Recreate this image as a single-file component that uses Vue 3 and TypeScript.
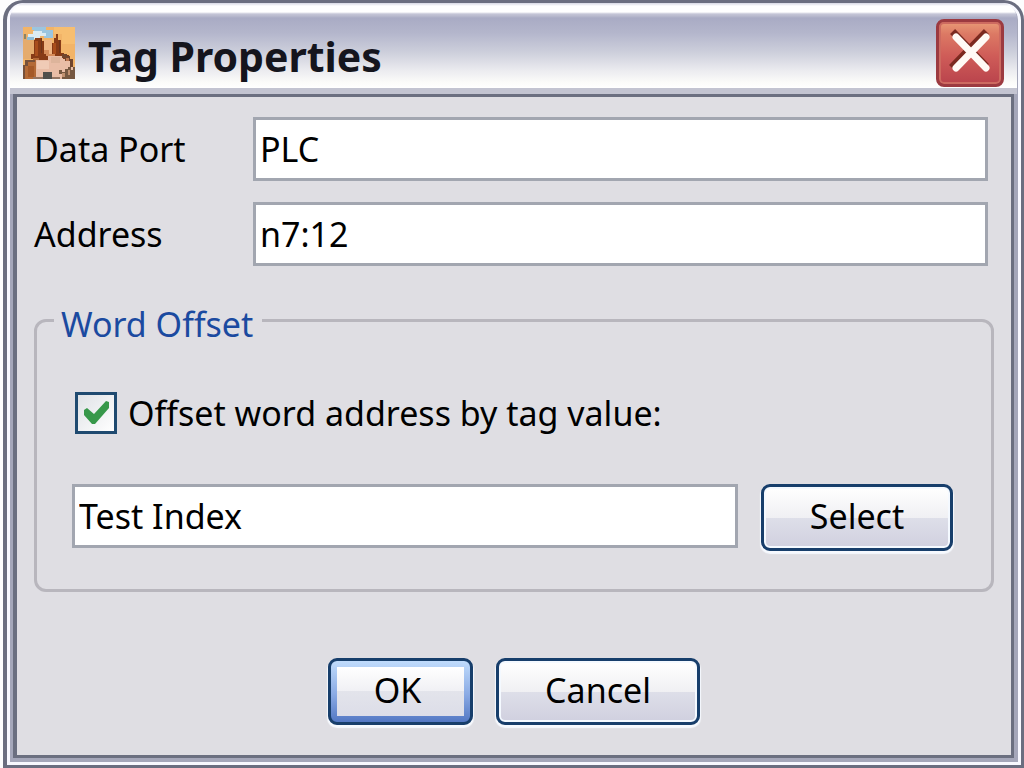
<script setup lang="ts">
import { ref } from 'vue'

const dataPort = ref('PLC')
const address = ref('n7:12')
const offsetEnabled = ref(true)
const offsetTag = ref('Test Index')
</script>

<template>
  <main class="window">
    <header class="titlebar">
      <svg class="app-icon" viewBox="0 0 156 156" shape-rendering="crispEdges" aria-hidden="true">
        <rect width="156" height="156" fill="#f2b468" />
        <path d="M94 0h62v50h-40V20H94z" fill="#f7be70" />
        <path d="M0 20h12v15h22v61H0z" fill="#e5ab6c" />
        <path d="M62 38h26v42H62z" fill="#efb684" />
        <path d="M28 0h41v10h20v23H62v-5H34V10h-6z" fill="#9bc5df" />
        <path d="M14 21h17V11h26v6h12v9H52v6H38v5H14z" fill="#dcebf2" />
        <path d="M12 30h20v9H12z" fill="#8ebcd6" />
        <path d="M3 22h6v13H3z" fill="#8b8567" />
        <path d="M34 40h3v-7h19v9h6v38h26V47h6V33h4V21h8v17h7v39h11v8h14v13H31V96h-8V80h11z" fill="#873b16" />
        <path d="M37 42h9v44h-9zM91 48h9v34h-9z" fill="#a94e1c" />
        <path d="M53 34h4v44h-4zM107 40h5v38h-5z" fill="#6f351b" />
        <path d="M64 68h13v12H64zM70 80h26v8H70z" fill="#d68d5b" />
        <path d="M0 116h7v-16h22v-6h18v62H0z" fill="#b46a37" />
        <path d="M7 98h28v8H14v11H7zM0 115h6v41H0z" fill="#76503a" />
        <path d="M14 116h20v34H14z" fill="#a55928" />
        <path d="M38 98h38V87h43v10h22v22h10v37H38z" fill="#e9bda6" />
        <path d="M43 101h35v26H43z" fill="#f0cbb6" />
        <path d="M84 91h26v18H84z" fill="#ddb49b" />
        <path d="M116 80h16v8h10v8h8v24h-10v-18h-14v-8h-10z" fill="#70452e" />
        <path d="M130 92h8v9h-8z" fill="#bd7750" />
        <path d="M109 128h8v8h8v-9h9v-7h9v9h6v-8h7v35h-38v-16h-9z" fill="#765841" />
        <path d="M117 137h9v12h-9zM134 129h7v15h-7z" fill="#c0906f" />
        <path d="M60 136h28v20H60z" fill="#51504c" />
        <path d="M30 150h30v6H30zM88 150h22v6H88z" fill="#957562" />
      </svg>
      <h1>Tag Properties</h1>
      <button class="close" type="button" aria-label="Close">
        <svg viewBox="0 0 62 62" aria-hidden="true">
          <path d="M16 12 45 42M45 12 15 43" stroke="#7b2a20" stroke-width="7" stroke-linecap="square" />
          <path d="M17 15 47 46M47 15 17 46" stroke="#fffaf5" stroke-width="7" stroke-linecap="round" />
        </svg>
      </button>
    </header>

    <form class="body" @submit.prevent>
      <div class="fields">
        <label for="port">Data Port</label>
        <input id="port" v-model="dataPort" class="text" type="text" />
        <label for="address">Address</label>
        <input id="address" v-model="address" class="text" type="text" />
      </div>

      <fieldset>
        <legend>Word Offset</legend>
        <label class="check">
          <input v-model="offsetEnabled" type="checkbox" />
          <svg class="box" viewBox="0 0 36 36" aria-hidden="true">
            <path v-if="offsetEnabled" d="M6 15l3-2 7 6L28 6l3 1v6L17 29h-3L6 20z" fill="#37984a" />
          </svg>
          <span>Offset word address by tag value:</span>
        </label>
        <div class="tag-row">
          <input v-model="offsetTag" class="text" type="text" aria-label="Offset tag" />
          <button class="btn select" type="button">Select</button>
        </div>
      </fieldset>

      <footer>
        <button class="btn ok" type="submit">OK</button>
        <button class="btn cancel" type="button">Cancel</button>
      </footer>
    </form>
  </main>
</template>

<style>
body {
  margin: 0;
  background: #fdfdfe;
}
</style>

<style scoped>
* {
  box-sizing: border-box;
}

.window {
  display: flex;
  flex-direction: column;
  min-height: 100vh;
  margin-left: 3px;
  padding: 0 7px 7px 6px;
  border: 3px solid #6b6e80;
  border-left-width: 4px;
  border-radius: 20px 20px 0 0;
  background: #dfdee3;
  box-shadow: inset 0 0 0 3px #f8f8ff, inset 0 0 0 7px #a5a7ba;
  font-family: "Noto Sans", sans-serif;
  font-size: 34px;
  line-height: 40px;
  color: #000;
}

.titlebar {
  display: flex;
  align-items: center;
  height: 91px;
  margin: 0 -3px;
  padding: 15px 13px 0;
  border-bottom: 6px solid #c3c4d1;
  border-radius: 16px 16px 0 0;
  background: linear-gradient(#d6d7e4 0, #fff 3px, #fff 9px, #c4c5d7 11px, #b9bace 13px, #a9abc4 15px, #b4b6cc 30px, #ced0dc 50px, #ececf0 68px, #fbfbf9 79px, #fff 85px);
}

.app-icon {
  width: 52px;
  height: 52px;
  flex: none;
}

h1 {
  flex: 1;
  margin: 0 0 0 13px;
  padding-top: 5px;
  font-size: 41px;
  line-height: 48px;
  font-weight: 700;
  color: #15151d;
}

.close {
  width: 68px;
  height: 68px;
  padding: 0;
  border: 3px solid #9c3a40;
  border-radius: 8px;
  background: linear-gradient(#e99a76 0, #dc7964 12px, #cf5c58 34px, #b9434c 100%);
  box-shadow: inset 0 0 0 2px #cd6a60;
}

.close svg {
  display: block;
  width: 62px;
  height: 62px;
  fill: none;
}

.body {
  flex: 1;
  padding: 20px 17px 29px;
  border: 3px solid #6b6f80;
  border-left-width: 4px;
}

.fields {
  display: grid;
  grid-template-columns: 219px 1fr;
  row-gap: 21px;
  align-items: center;
  padding-right: 6px;
}

.text {
  width: 100%;
  min-width: 0;
  height: 64px;
  padding: 0 4px;
  border: 3px solid #a2a6b0;
  border-radius: 0;
  outline: none;
  background: #fff;
  font: inherit;
  color: inherit;
}

fieldset {
  min-width: 0;
  margin: 30px 0 0;
  padding: 47px 38px 38px 35px;
  border: 3px solid #b8b6bd;
  border-radius: 12px;
}

legend {
  margin-left: -18px;
  padding: 8px 9px 0 7px;
  color: #1b4aa0;
}

.check {
  display: flex;
  align-items: center;
  gap: 11px;
  height: 44px;
  padding-left: 3px;
}

.check input {
  position: absolute;
  width: 42px;
  height: 42px;
  margin: 0;
  opacity: 0;
}

.box {
  width: 42px;
  height: 42px;
  flex: none;
  border: 3px solid #1f4a70;
  background: linear-gradient(135deg, #dfe2e6, #fff);
}

.tag-row {
  display: flex;
  align-items: flex-start;
  gap: 23px;
  margin-top: 49px;
}

.tag-row .text {
  flex: 1;
}

.btn {
  height: 67px;
  padding: 0 0 4px;
  border: 3px solid #173e6b;
  border-radius: 9px;
  background: linear-gradient(#fff 0, #f0f0f3 50%, #dedfe9 50%, #d0d0df 100%);
  box-shadow: inset 0 0 0 2px #f4f9ff, 0 2px 1px 1px #f6f9fe;
  font: inherit;
  color: inherit;
}

.select {
  width: 192px;
}

footer {
  display: flex;
  justify-content: center;
  gap: 23px;
  margin-top: 66px;
}

.ok {
  width: 145px;
  padding-right: 6px;
  background:
    linear-gradient(#fff 0, #f0f0f4 50%, #e3e4eb 50%, #dcdde8 100%) center / calc(100% - 12px) calc(100% - 12px) no-repeat,
    linear-gradient(#c0dcfc, #8aaae4 55%, #5378c4);
  box-shadow: 0 2px 1px 1px #f6f9fe;
}

.cancel {
  width: 204px;
}
</style>
